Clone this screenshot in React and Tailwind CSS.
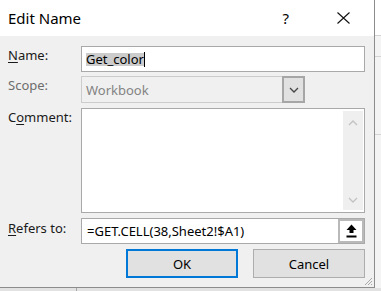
import React from "react";

const F = "font-['Noto_Sans',sans-serif]";

function Chevron({ dir = "down", color = "#333", size = 10 }) {
  const d = dir === "down" ? "M1 3 L5 7 L9 3" : "M1 7 L5 3 L9 7";
  return (
    <svg width={size} height={size} viewBox="0 0 10 10">
      <path d={d} fill="none" stroke={color} strokeWidth="1.3" />
    </svg>
  );
}

export default function App() {
  return (
    <div className={`w-[381px] h-[291px] overflow-hidden bg-[#e4e4e4] ${F} text-[#1a1a1a]`}>
      <div className="flex">
        <div className="relative w-[375px] h-[288px] border-r border-b border-[#8c8c8c] flex flex-col bg-[#f0f0f0]">
          {/* Title bar */}
          <div className="h-[36px] bg-white flex items-center">
            <div className="pl-[8px] text-[15px] leading-[18px] text-black">Edit Name</div>
            <div className="ml-auto flex items-center">
              <div className="text-[15px] leading-[18px] text-black">?</div>
              <div className="w-[48px]" />
              <svg width="13" height="12" viewBox="0 0 13 12">
                <path d="M0.5 0.5 L12.5 11.5 M12.5 0.5 L0.5 11.5" stroke="#111" strokeWidth="1.1" />
              </svg>
              <div className="w-[24px]" />
            </div>
          </div>

          {/* Body */}
          <div className="flex-1 pl-[8px] pr-[9px] text-[13px] leading-[16px]">
            {/* Name */}
            <div className="flex items-start mt-[10px]">
              <div className="w-[73px] pt-[1px]">
                <span className="underline underline-offset-[2px]">N</span>ame:
              </div>
              <div className="w-[284px] h-[26px] border border-[#a9a9a9] bg-white flex items-center pl-[4px]">
                <span className="bg-[#cccccc] leading-[13px] h-[13px] inline-flex items-center text-black">Get_color</span>
                <span className="w-[1px] h-[15px] bg-black" />
              </div>
            </div>

            {/* Scope */}
            <div className="flex items-start mt-[4px]">
              <div className="w-[73px] pt-[1px] text-[#6d6d6d]">Scope:</div>
              <div className="w-[224px] h-[27px] flex">
                <div className="flex-1 border border-r-0 border-[#cccccc] bg-[#f0f0f0] flex items-center pl-[4px] text-[#838383]">
                  Workbook
                </div>
                <div className="w-[23px] h-[27px] border-2 border-[#a6a6a6] bg-[#e1e1e1] flex items-center justify-center">
                  <Chevron dir="down" color="#444" size={10} />
                </div>
              </div>
            </div>

            {/* Comment */}
            <div className="flex items-start mt-[5px]">
              <div className="w-[73px] pt-[1px]">
                C<span className="underline underline-offset-[2px]">o</span>mment:
              </div>
              <div className="w-[284px] h-[105px] border border-[#a9a9a9] bg-white flex justify-end pt-[2px] pb-[2px] pr-[1px]">
                <div className="w-[20px] h-full bg-[#efefef] flex flex-col items-center justify-between pt-[7px] pb-[5px]">
                  <Chevron dir="up" color="#c2c2c2" size={10} />
                  <Chevron dir="down" color="#c2c2c2" size={10} />
                </div>
              </div>
            </div>

            {/* Refers to */}
            <div className="flex items-start mt-[5px]">
              <div className="w-[73px] pt-[2px]">
                <span className="underline underline-offset-[2px]">R</span>efers to:
              </div>
              <div className="w-[284px] h-[26px] border border-[#a9a9a9] bg-white flex items-center">
                <div className="flex-1 pl-[5px] text-black whitespace-nowrap">=GET.CELL(38,Sheet2!$A1)</div>
                <div className="w-[26px] h-[24px] border-2 border-[#b9b9b9] bg-white flex items-center justify-center">
                  <svg width="11" height="14" viewBox="0 0 11 14">
                    <path d="M5.5 0.5 L10.5 6 L7.5 6 L7.5 9 L3.5 9 L3.5 6 L0.5 6 Z" fill="#000" />
                    <rect x="0.5" y="11.5" width="10" height="2" fill="#000" />
                  </svg>
                </div>
              </div>
            </div>

            {/* Buttons */}
            <div className="flex justify-end gap-[15px] mt-[5px]">
              <div className="w-[112px] h-[29px] border-2 border-[#0078d7] bg-[#e1e1e1] flex items-center justify-center text-black">
                OK
              </div>
              <div className="w-[112px] h-[29px] border border-[#adadad] bg-[#e1e1e1] flex items-center justify-center text-black">
                Cancel
              </div>
            </div>
          </div>

          {/* Resize grip */}
          <svg className="absolute right-[1px] bottom-[1px]" width="10" height="10" viewBox="0 0 10 10">
            <path d="M9 2 L2 9 M9 5 L5 9 M9 8 L8 9" stroke="#a8a8a8" strokeWidth="1" />
          </svg>
        </div>
        {/* Right excel strip */}
        <div className="w-[6px] h-[288px] bg-white flex flex-col">
          <div className="h-[36px] border-b border-[#d4d4d4]" />
          <div className="h-[21px] border-b border-[#d4d4d4] bg-[#f4f4f4]" />
          <div className="h-[78px] border-b border-[#d4d4d4] bg-[#f4f4f4]" />
          <div className="flex-1 bg-[#f4f4f4]" />
        </div>
      </div>
      {/* Bottom excel strip */}
      <div className="h-[3px] flex bg-[#e2e2e2]">
        <div className="w-[77px] border-r border-[#a8a8a8]" />
      </div>
    </div>
  );
}
